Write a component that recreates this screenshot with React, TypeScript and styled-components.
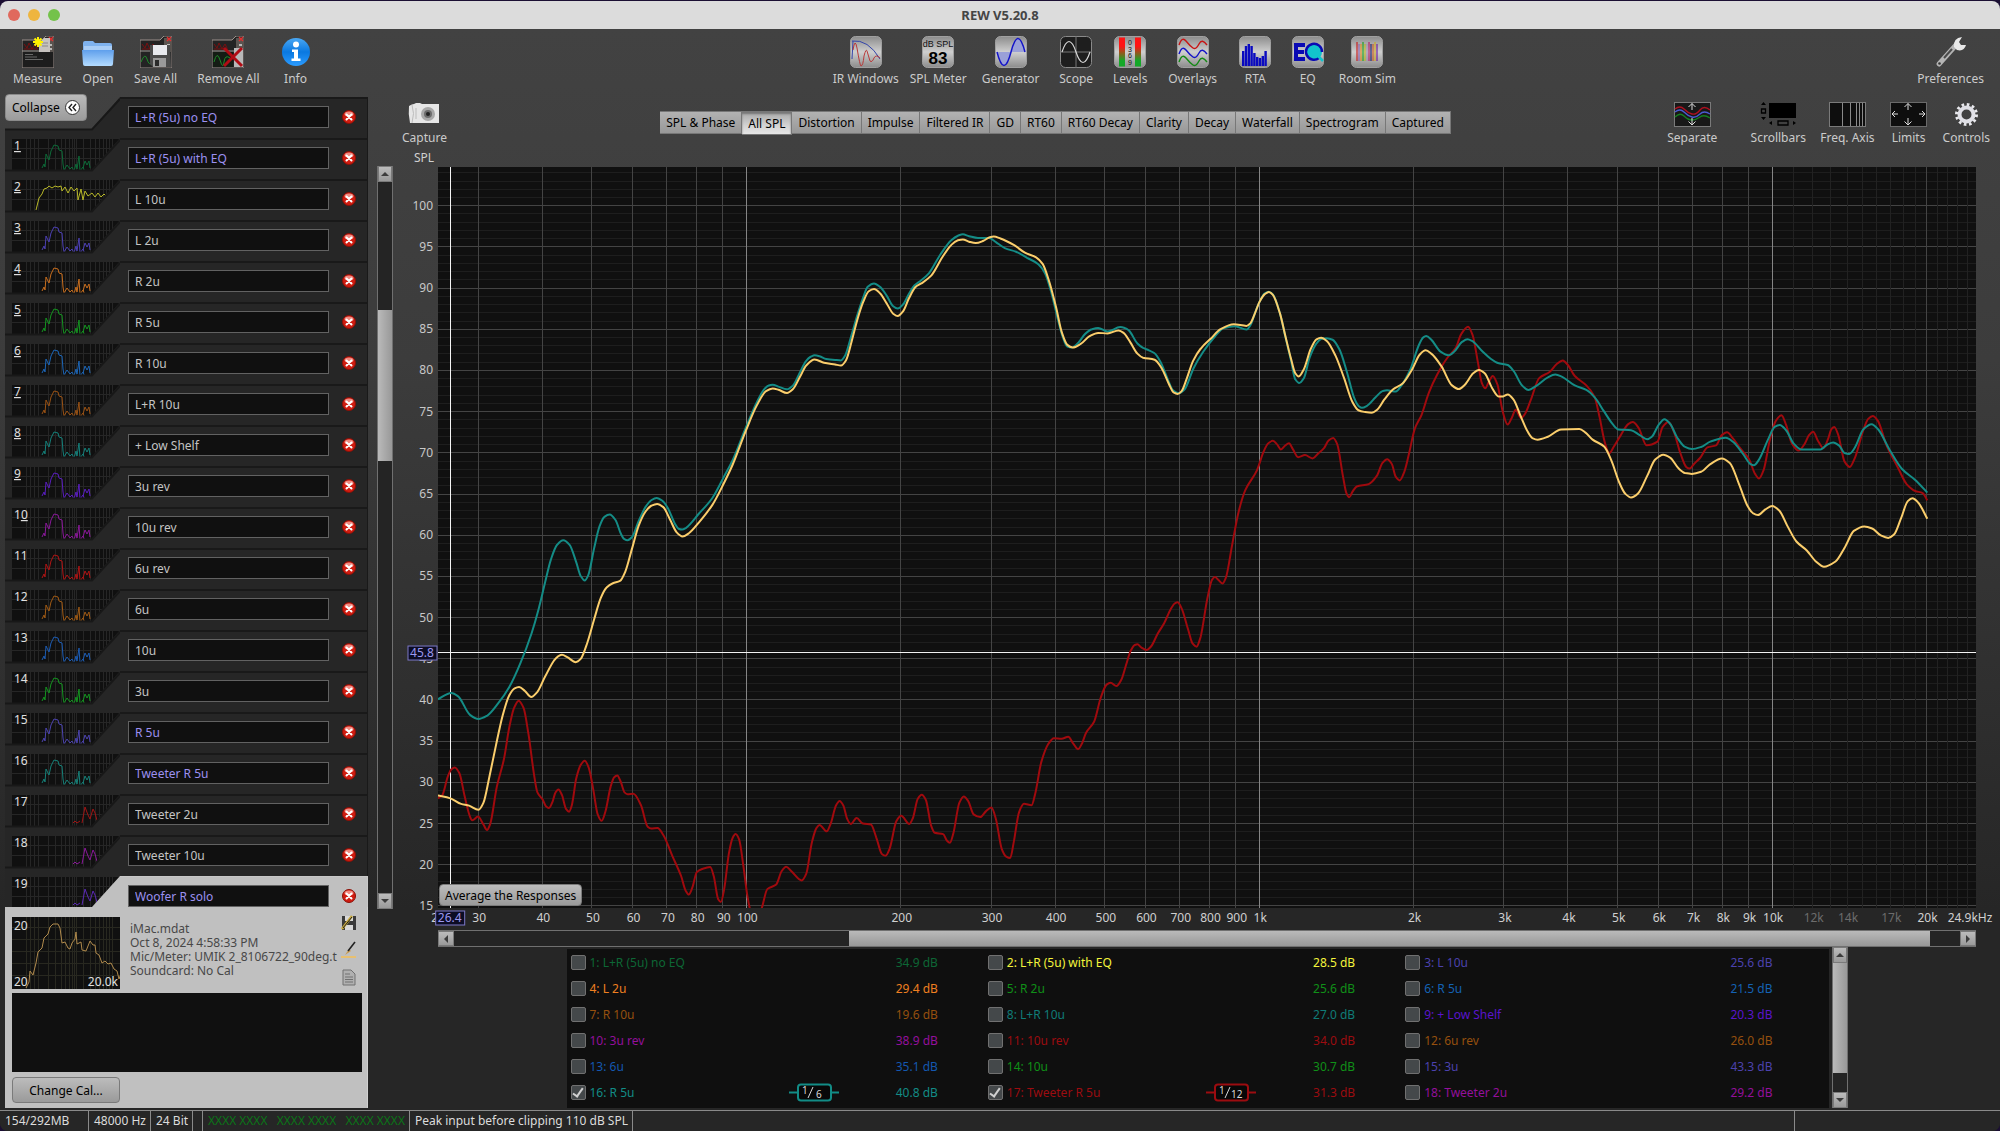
import React from 'react';
import styled, { createGlobalStyle, css } from 'styled-components';

const FONT = '"Noto Sans", "Open Sans", "Liberation Sans", sans-serif';

const GlobalStyle = createGlobalStyle`
  * { box-sizing: border-box; }
  body { margin: 0; background: #1b0f33; font-family: ${FONT}; font-size: 12px; color: #d0d0d0; }
  button, input, textarea { font-family: inherit; font-size: inherit; margin: 0; }
  button { cursor: default; }
  svg { display: block; }
`;

/* ---------- shared parts ---------- */

const metal = css`
  background: linear-gradient(#bcbcbc, #9a9a9a);
  border: 1px solid #7a7a7a;
`;

const Window = styled.div`
  display: flex;
  flex-direction: column;
  min-height: 100vh;
  border-top: 1px solid #1b0f33;
`;

const TitleBar = styled.header`
  display: grid;
  grid-template-columns: 1fr auto 1fr;
  align-items: center;
  height: 28px;
  padding: 0 8px;
  background: #dcdcdc;
  border-radius: 8px 8px 0 0;
`;

const Lights = styled.div`
  display: flex;
  gap: 8px;
`;

const Light = styled.button<{ $color: string }>`
  width: 12px;
  height: 12px;
  padding: 0;
  border: 0;
  border-radius: 50%;
  background: ${(p) => p.$color};
`;

const Title = styled.h1`
  margin: 0;
  font-size: 13px;
  font-weight: 700;
  line-height: 16px;
  color: #454545;
`;

const Surface = styled.div`
  flex: 1;
  display: flex;
  flex-direction: column;
  background: linear-gradient(#424242, #3c3c3c 30%, #262626 80%, #262626);
  border-radius: 0 0 8px 8px;
  overflow: hidden;
`;

const Toolbar = styled.nav`
  display: flex;
  justify-content: space-between;
  height: 68px;
  padding: 7px 16px 0 13px;
`;

const ToolGroup = styled.div<{ $gap: number }>`
  display: flex;
  align-items: flex-start;
  gap: ${(p) => p.$gap}px;
`;

const ToolButton = styled.button<{ $min?: number }>`
  display: flex;
  flex-direction: column;
  align-items: center;
  gap: 2px;
  min-width: ${(p) => p.$min ?? 0}px;
  padding: 0;
  border: 0;
  background: none;
  color: #cbcbcb;
  line-height: 17px;
  white-space: nowrap;
`;

const Body = styled.div`
  flex: 1;
  display: grid;
  grid-template-columns: 363px 16px 1fr;
  column-gap: 9px;
  padding-left: 5px;
`;

/* ---------- measurement list ---------- */

const Sidebar = styled.aside`
  display: flex;
  flex-direction: column;
  padding-bottom: 2px;
`;

const Folder = styled.div<{ $first?: boolean; $open?: boolean }>`
  flex: ${(p) => (p.$open ? '0 0 31px' : '1 0 41px')};
  display: flex;
  background: ${(p) => (p.$first ? 'none' : '#262626')};
  position: relative;
`;

const TabFace = styled.div<{ $open?: boolean }>`
  flex: 1;
  display: flex;
  align-items: flex-start;
  gap: 13px;
  padding: ${(p) => (p.$open ? '8px 11px 0 8px' : '7px 11px 0 8px')};
  background: ${(p) => (p.$open ? '#c0c0c0' : '#262626')};
  border-top: ${(p) => (p.$open ? '1px solid #c8c8c8' : '2px solid #191919')};
  border-right: 1px solid ${(p) => (p.$open ? '#c8c8c8' : '#191919')};
`;

const NameField = styled.input<{ $hot?: boolean }>`
  flex: 1;
  min-width: 0;
  height: 22px;
  padding: 0 6px;
  border: 1px solid #626262;
  background: #101010;
  color: ${(p) => (p.$hot ? '#9c90f0' : '#c4c4c4')};
`;

const DeleteButton = styled.button`
  width: 14px;
  height: 14px;
  margin-top: 4px;
  padding: 0;
  border: 0;
  background: none;
`;

const CollapseButton = styled.button`
  position: absolute;
  left: 0;
  top: -3px;
  display: flex;
  align-items: center;
  gap: 5px;
  height: 27px;
  padding: 0 6px;
  border: 1px solid #8a8a8a;
  border-radius: 4px;
  background: linear-gradient(#bababa, #9c9c9c);
  color: #000;
`;

const Card = styled.section`
  display: flex;
  flex-direction: column;
  padding: 10px 5px 5px 7px;
  background: #c0c0c0;
  border-right: 1px solid #d0d0d0;
`;

const CardHead = styled.div`
  display: grid;
  grid-template-columns: 108px 1fr 20px;
  column-gap: 10px;
  padding-right: 3px;
`;

const CardText = styled.p`
  min-width: 0;
  margin: 5px 0 0;
  color: #484848;
  line-height: 14px;
  white-space: pre;
`;

const CardTools = styled.div`
  display: flex;
  flex-direction: column;
  align-items: center;
  gap: 10px;
  margin-top: -2px;
`;

const BareButton = styled.button`
  padding: 0;
  border: 0;
  background: none;
`;

const Notes = styled.textarea`
  height: 79px;
  margin: 4px 0 5px;
  padding: 4px;
  border: 0;
  background: #101010;
  color: #d0d0d0;
  resize: none;
`;

const MetalButton = styled.button<{ $width?: number }>`
  ${metal}
  align-self: flex-start;
  width: ${(p) => (p.$width ? `${p.$width}px` : 'auto')};
  height: ${(p) => (p.$width ? 26 : 22)}px;
  padding: 0 5px;
  border-radius: 4px;
  color: #000;
`;

/* ---------- scroll bars ---------- */

const VScroll = styled.div<{ $top?: number; $bottom?: number }>`
  display: flex;
  flex-direction: column;
  width: 16px;
  margin: ${(p) => p.$top ?? 0}px 0 ${(p) => p.$bottom ?? 0}px;
  background: #242424;
  border: solid #707070;
  border-width: 0 1px;
`;

const HScroll = styled.div`
  display: flex;
  height: 17px;
  background: #242424;
  border: solid #707070;
  border-width: 1px 0;
`;

const Space = styled.div<{ $grow: number }>`
  flex: ${(p) => p.$grow} 1 0;
`;

const Thumb = styled.div<{ $grow: number; $vertical?: boolean }>`
  flex: ${(p) => p.$grow} 1 0;
  background: linear-gradient(${(p) => (p.$vertical ? 'to right, ' : '')}#bababa, #989898);
`;

const ArrowButton = styled.button`
  ${metal}
  display: flex;
  align-items: center;
  justify-content: center;
  flex: 0 0 16px;
  min-height: 15px;
  padding: 0;
`;

/* ---------- graph area ---------- */

const Main = styled.main`
  display: flex;
  flex-direction: column;
  min-width: 0;
`;

const ViewBar = styled.div`
  display: flex;
  justify-content: space-between;
  height: 54px;
  padding: 5px 10px 0 0;
`;

const Tabs = styled.div`
  display: flex;
  align-self: flex-start;
  height: 23px;
  margin: 9px 0 0 16px;
`;

const Tab = styled.button<{ $active?: boolean }>`
  padding: 0 6px;
  height: ${(p) => (p.$active ? 24 : 23)}px;
  border: 1px solid #777;
  border-left-width: 0;
  background: ${(p) => (p.$active ? 'linear-gradient(#a8a8a8, #d2d2d2 60%, #e6e6e6)' : 'linear-gradient(#b2b2b2, #989898)')};
  box-shadow: ${(p) => (p.$active ? 'inset 0 2px 2px #777' : 'none')};
  color: #000;
  white-space: nowrap;
`;

const AxisTitle = styled.div`
  height: 16px;
  padding-left: 12px;
  line-height: 14px;
`;

const GraphGrid = styled.div`
  flex: 1;
  display: grid;
  grid-template: 1fr 22px 17px / 36px 1fr;
  padding-right: 24px;
`;

const AxisCell = styled.div`
  position: relative;
  & > svg { position: absolute; inset: 0; overflow: visible; }
`;

const PlotCell = styled.div`
  position: relative;
  min-height: 400px;
  background: #101010;
  & > svg { position: absolute; inset: 0; }
`;

const Floating = styled.div`
  position: absolute;
  left: 1px;
  bottom: 2px;
`;

const LegendRow = styled.div`
  display: flex;
  justify-content: center;
  height: 163px;
  padding: 0 24px 2px 36px;
`;

const Legend = styled.div`
  display: grid;
  grid-template-columns: repeat(3, 1fr);
  align-content: start;
  width: 1262px;
  margin: 2px 3px 0 0;
  padding-right: 10px;
  background: #0f0f0f;
`;

const LegendItem = styled.label<{ $color: string }>`
  display: flex;
  align-items: center;
  height: 26px;
  padding: 0 46px 0 4px;
  color: ${(p) => p.$color};
`;

const Tick = styled.input`
  appearance: none;
  display: grid;
  place-items: center;
  width: 15px;
  height: 15px;
  margin-right: 4px;
  border: 1px solid #707070;
  border-radius: 2px;
  background: #44484a;
  &:checked::after {
    content: "";
    width: 4px;
    height: 9px;
    margin-bottom: 2px;
    border: solid #d0d0d0;
    border-width: 0 2px 2px 0;
    transform: rotate(35deg);
  }
`;

const LegendName = styled.span`
  flex: 1;
`;

const LegendValue = styled.span`
  width: 99px;
  text-align: right;
`;

/* ---------- status bar ---------- */

const Status = styled.footer`
  display: flex;
  height: 21px;
  border-top: 1px solid #8a8a8a;
  background: #262626;
  line-height: 20px;
  color: #dcdcdc;
  white-space: pre;
`;

const StatusCell = styled.div<{ $min?: number; $green?: boolean }>`
  min-width: ${(p) => p.$min ?? 0}px;
  padding: 0 4px 0 5px;
  border-right: 1px solid #8a8a8a;
  color: ${(p) => (p.$green ? '#0b7418' : 'inherit')};
`;

const StatusFill = styled.div`
  flex: 1;
  border-right: 1px solid #8a8a8a;
`;

const StatusEnd = styled.div`
  width: 205px;
`;

/* ---------- icons ---------- */

const Tile = ({ dark, children }: { dark?: boolean; children: React.ReactNode }) => (
  <svg width="32" height="32" viewBox="0 0 32 32">
    <defs>
      <linearGradient id="tile" x1="0" y1="0" x2="0" y2="1">
        <stop offset="0" stopColor="#8c8c8c" />
        <stop offset="0.5" stopColor="#cfcfcf" />
        <stop offset="1" stopColor="#8c8c8c" />
      </linearGradient>
    </defs>
    <rect x="0.5" y="0.5" width="31" height="31" rx="5" fill={dark ? '#1e1e1e' : 'url(#tile)'} stroke={dark ? '#8a8a8a' : '#a0a0a0'} />
    {children}
  </svg>
);

const FolderBase = () => (
  <>
    <path d="M0 4h20l4-4h8v32H0z" fill="#232323" stroke="#9a8f8a" strokeWidth="1" />
    <path d="M2 8l3 4 2-5 3 6 3-5 2 4M2 13h14" stroke="#7a1010" fill="none" />
    <path d="M0 15h32" stroke="#a09a96" />
    <path d="M24 2h8v14h-8z" fill="#5a5450" />
    <path d="M27 1l4 4m0-4l-4 4" stroke="#e03030" strokeWidth="1.4" />
    <path d="M27 9h3M27 13h3" stroke="#d8d8d8" strokeWidth="1.5" />
  </>
);

const MeasureIcon = () => (
  <svg width="32" height="32" viewBox="0 0 32 32">
    <FolderBase />
    <path d="M17 7l5-5h6v14H17z" fill="#c6c2bf" />
    <path d="M20 7h6M20 10h6" stroke="#888" />
    <rect x="1" y="16" width="30" height="15" fill="#1d1d1d" />
    <path d="M3 18.500h8M3 21h12M3 23.500h18" stroke="#7c7c7c" strokeWidth="0.800" />
    <path d="M16 1v10M11 6h10M12.500 2.500l7 7M19.500 2.500l-7 7" stroke="#fff200" strokeWidth="2" />
  </svg>
);

const OpenIcon = () => (
  <svg width="32" height="32" viewBox="0 0 32 32">
    <defs>
      <linearGradient id="open" x1="0" y1="0" x2="0" y2="1">
        <stop offset="0" stopColor="#5f9fec" />
        <stop offset="1" stopColor="#b4dcff" />
      </linearGradient>
    </defs>
    <path d="M1 28V7q0-2 2-2h8l2 2h15q2 0 2 2v19z" fill="#7fb2ee" />
    <path d="M2 10h28v5H2z" fill="#a9cdf6" />
    <path d="M0 14h32l-1 14q0 2-2 2H3q-2 0-2-2z" fill="url(#open)" />
  </svg>
);

const SaveAllIcon = () => (
  <svg width="32" height="32" viewBox="0 0 32 32">
    <FolderBase />
    <path d="M1 26q4-10 6-3t5 4" stroke="#1f8a2a" fill="none" />
    <path d="M10 9h20l1 22H13l-3-3z" fill="#4a4a4a" />
    <rect x="13" y="9" width="14" height="10" fill="#e8eaee" />
    <rect x="13" y="22" width="13" height="9" fill="#9a9a9a" />
    <rect x="15" y="24" width="4" height="6" fill="#2a2a2a" />
  </svg>
);

const RemoveAllIcon = () => (
  <svg width="32" height="32" viewBox="0 0 32 32">
    <FolderBase />
    <rect x="1" y="16" width="20" height="15" fill="#141c14" />
    <path d="M2 26q3-12 6-2t4 2 6-4" stroke="#1f8a2a" fill="none" />
    <rect x="22" y="12" width="9" height="19" fill="#b8b8b8" />
    <path d="M12 12l18 18M30 12L12 30" stroke="#b00c14" strokeWidth="3" />
  </svg>
);

const InfoIcon = () => (
  <svg width="32" height="32" viewBox="0 0 32 32">
    <defs>
      <linearGradient id="info" x1="0" y1="0" x2="0" y2="1">
        <stop offset="0" stopColor="#4aa8f4" />
        <stop offset="0.5" stopColor="#0a78e0" />
        <stop offset="1" stopColor="#2c9cff" />
      </linearGradient>
    </defs>
    <circle cx="16" cy="16" r="14" fill="url(#info)" />
    <circle cx="16" cy="8.500" r="3" fill="#fff" />
    <path d="M12 13.500h6v9h2.500v2.500h-9v-2.500h2.500v-6.500H12z" fill="#fff" />
  </svg>
);

const IrIcon = () => (
  <Tile>
    <path d="M2 5q16-2 28 18" stroke="#3344aa" fill="none" />
    <path d="M2 23L3 5" stroke="#3344aa" fill="none" />
    <path d="M3 14q2-13 4-2 3 18 4 18 2 0 3-10 2-8 3-5l3 10q2 2 4-3 2-4 6 0" stroke="#b83a3a" fill="none" />
  </Tile>
);

const SplIcon = () => (
  <Tile>
    <text x="16" y="11" fontSize="9" fill="#111" textAnchor="middle" fontFamily="Liberation Sans">dB SPL</text>
    <text x="16" y="28" fontSize="17" fontWeight="700" fill="#000" textAnchor="middle" fontFamily="Liberation Sans">83</text>
  </Tile>
);

const GeneratorIcon = () => (
  <Tile>
    <path d="M2 16q7 27 14 0z" fill="#9aa0d8" />
    <path d="M16 16q7-27 14 0z" fill="#9aa0d8" />
    <path d="M2 16q7 27 14 0t14 0" stroke="#1414c8" strokeWidth="1.500" fill="none" />
  </Tile>
);

const ScopeIcon = () => (
  <Tile dark>
    <path d="M0 16h32M16 0v32" stroke="#777" />
    <path d="M2 16q7-21 14 0t14 0" stroke="#d8d8d8" strokeWidth="1.200" fill="none" />
  </Tile>
);

const LevelsIcon = () => (
  <Tile>
    <defs>
      <linearGradient id="lvl" x1="0" y1="0" x2="0" y2="1">
        <stop offset="0.300" stopColor="#ff1414" />
        <stop offset="0.800" stopColor="#14a828" />
      </linearGradient>
    </defs>
    <rect x="5" y="1.500" width="6" height="29" fill="url(#lvl)" />
    <rect x="21" y="1.500" width="6" height="29" fill="url(#lvl)" />
    {['0', '3', '6', '9'].map((n, i) => (
      <text key={n} x="16" y={9 + i * 6.5} fontSize="7" fill="#111" textAnchor="middle" fontFamily="Liberation Sans">{n}</text>
    ))}
  </Tile>
);

const OverlaysIcon = () => (
  <Tile>
    <path d="M2 9q3-9 7-4t7 7 6-4 8 1" stroke="#c81414" strokeWidth="1.400" fill="none" />
    <path d="M2 18q3-9 7-4t7 7 6-4 8 1" stroke="#1414c8" strokeWidth="1.400" fill="none" />
    <path d="M2 26q3-9 7-4t7 7 6-4 8 1" stroke="#148a14" strokeWidth="1.400" fill="none" />
  </Tile>
);

const RtaIcon = () => (
  <Tile>
    {[15, 20, 22, 20, 13, 9, 8, 10, 15].map((h, i) => (
      <rect key={i} x={3 + i * 2.8} y={30 - h} width="2.400" height={h} fill="#0a0ac0" />
    ))}
  </Tile>
);

const EqIcon = () => (
  <Tile>
    <path d="M2 7h11v4H6v3h6v4H6v3h7v4H2z" fill="#0a0ab4" />
    <circle cx="22" cy="16" r="8" fill="#12c4cc" />
    <path d="M27 22a8 8 0 1 1 3-6" stroke="#0a0ab4" strokeWidth="2.500" fill="none" />
    <path d="M26 20l5 5" stroke="#12c4cc" strokeWidth="2.500" />
  </Tile>
);

const ROOM_COLORS = ['#c81414', '#8a5ab0', '#e08a14', '#14a014', '#b4b414', '#a08ab0', '#b41464', '#141464', '#c85014', '#d2aa14', '#6a14a0'];

const RoomIcon = () => (
  <Tile>
    {ROOM_COLORS.map((c, i) => (
      <path key={c} d={`M${6 + i * 2} ${i % 3 ? 8 : 6}V25`} stroke={c} strokeWidth="1.100" />
    ))}
  </Tile>
);

const WrenchIcon = () => (
  <svg width="32" height="32" viewBox="0 0 32 32">
    <path d="M4 28L21 9" stroke="#b4b4b4" strokeWidth="5" strokeLinecap="round" />
    <path d="M9 22l8-9" stroke="#4a4a4a" strokeWidth="2" />
    <path d="M19 11q-1-9 8-10l-3 5 2 3h5q-2 7-9 5z" fill="#e8e8e8" />
    <circle cx="4.500" cy="27.500" r="1.300" fill="#333" />
  </svg>
);

const CameraIcon = () => (
  <svg width="32" height="25" viewBox="0 0 32 25">
    <path d="M1 4q3-2 5-2l2-1h4l2 1h17v19H2q-2-9-1-17z" fill="#e6e6e6" />
    <path d="M4 3q3 8 0 18M8 6v11" stroke="#bcbcbc" fill="none" />
    <circle cx="20" cy="12" r="7" fill="#a8a8a8" />
    <circle cx="20" cy="12" r="4" fill="#6c6c6c" />
    <circle cx="20" cy="12" r="2" fill="#222" />
  </svg>
);

const SeparateIcon = () => (
  <svg width="37" height="25" viewBox="0 0 37 25">
    <rect x="0.500" y="0.500" width="36" height="24" fill="#181818" stroke="#7a7a7a" />
    <path d="M1 7q5-4 9 0t8 5 8-4 10 0" stroke="#b01020" strokeWidth="1.400" fill="none" />
    <path d="M1 10q5-4 9 0t8 5 8-3 10 0" stroke="#4a5ad0" strokeWidth="1.400" fill="none" />
    <path d="M1 15q5-5 9-1t8 4 8-3 10 1" stroke="#14801e" strokeWidth="1.400" fill="none" />
    <path d="M18 8V1.500M14.500 5L18 1.500 21.500 5M18 16v7M14.500 19.500L18 23l3.500-3.500" stroke="#ddd" fill="none" />
  </svg>
);

const ScrollbarsIcon = () => (
  <svg width="37" height="25" viewBox="0 0 37 25">
    <rect x="9" y="1" width="27" height="15" fill="#000" />
    <path d="M1 3l2.500-3L6 3zM1 15l2.500 3L6 15zM12 19v4l-3-2zM33 19v4l3-2z" fill="#000" />
    <path d="M1.500 7h4v4h-4zM18 19h10v4H18z" stroke="#000" fill="none" strokeWidth="1.300" />
  </svg>
);

const FreqAxisIcon = () => (
  <svg width="37" height="25" viewBox="0 0 37 25">
    <rect x="0.500" y="0.500" width="36" height="24" fill="#0e0e0e" stroke="#7a7a7a" />
    <path d="M13.500 1v23M21.500 1v23M27.500 1v23M30.500 1v23M33.500 1v23" stroke="#8a8a8a" />
  </svg>
);

const LimitsIcon = () => (
  <svg width="37" height="25" viewBox="0 0 37 25">
    <rect x="0.500" y="0.500" width="36" height="24" fill="#0e0e0e" stroke="#6a6a6a" />
    <path d="M18 8V1.500M14.500 5L18 1.500 21.500 5M18 16v7M14.500 19.500L18 23l3.500-3.500M8 12H2M5 9l-3 3 3 3M29 12h6M32 9l3 3-3 3" stroke="#ddd" fill="none" />
  </svg>
);

const GearIcon = () => (
  <svg width="25" height="25" viewBox="0 0 25 25">
    <circle cx="12.500" cy="12.500" r="10" fill="none" stroke="#e8e8ec" strokeWidth="3" strokeDasharray="2.618 2.618" />
    <circle cx="12.500" cy="12.500" r="7" fill="none" stroke="#e0e0e6" strokeWidth="4" />
  </svg>
);

const DeleteIcon = () => (
  <svg width="14" height="14" viewBox="0 0 14 14">
    <circle cx="7" cy="7" r="6.500" fill="#d01c10" stroke="#8a1008" />
    <ellipse cx="7" cy="4" rx="4.500" ry="2.500" fill="#f08a80" />
    <path d="M4.500 4.500l5 5M9.500 4.500l-5 5" stroke="#fff" strokeWidth="2" strokeLinecap="round" />
  </svg>
);

const ChevronsIcon = () => (
  <svg width="15" height="15" viewBox="0 0 15 15">
    <circle cx="7.500" cy="7.500" r="7" fill="#fff" stroke="#333" />
    <path d="M7 4L4 7.500 7 11M11 4L8 7.500 11 11" stroke="#222" strokeWidth="1.400" fill="none" />
  </svg>
);

const SaveIcon = () => (
  <svg width="16" height="16" viewBox="0 0 16 16">
    <path d="M1 1h14v14H1z" fill="#3a3a3a" />
    <path d="M4 1h8v5H4zM4 10h8v5H4z" fill="#d8d8d8" />
    <path d="M1 14L11 1" stroke="#c8a83a" strokeWidth="2.500" />
    <path d="M2 13L11 2" stroke="#222" />
  </svg>
);

const BrushIcon = () => (
  <svg width="16" height="18" viewBox="0 0 16 18">
    <path d="M0 15h15v2H0z" fill="#e8c070" />
    <path d="M4 14l4-6 2 2z" fill="#c89a50" />
    <path d="M7 10L14 1" stroke="#222" strokeWidth="1.600" />
  </svg>
);

const NoteIcon = () => (
  <svg width="14" height="17" viewBox="0 0 14 17">
    <path d="M1 1h8l4 4v11H1z" fill="#b0b0b0" stroke="#707070" />
    <path d="M3 5h5M3 8h8M3 10.500h8M3 13h8" stroke="#707070" strokeWidth="1.200" />
  </svg>
);

const Arrow = ({ dir }: { dir: 'up' | 'down' | 'left' | 'right' }) => {
  const d = { up: 'M0 6l4-4 4 4z', down: 'M0 2l4 4 4-4z', left: 'M6 0L2 4l4 4z', right: 'M2 0l4 4-4 4z' }[dir];
  return (
    <svg width="8" height="8" viewBox="0 0 8 8"><path d={d} fill="#3c3c3c" /></svg>
  );
};

/* ---------- data ---------- */

type Pt = [number, number];

const NAMES = ['L+R (5u) no EQ', 'L+R (5u) with EQ', 'L 10u', 'L 2u', 'R 2u', 'R 5u', 'R 10u', 'L+R 10u', '+ Low Shelf', '3u rev', '10u rev', '6u rev', '6u', '10u', '3u', 'R 5u', 'Tweeter R 5u', 'Tweeter 2u', 'Tweeter 10u'];
const HOT = [0, 1, 15, 16];
const TRACE_COLORS = ['', '#0d6a38', '#b8b828', '#4c40b4', '#c86e1e', '#149420', '#1c66b8', '#9a5214', '#14807a', '#5a1ec0', '#8a189a', '#b01414', '#a05a14', '#1c5cb4', '#149420', '#4c44b0', '#168078', '#a01414', '#8a189a', '#5a28b4'];

const LEGEND: { label: string; value: string; color: string; filter?: string }[] = [
  { label: '1: L+R (5u) no EQ', value: '34.9 dB', color: '#0d6635' },
  { label: '2: L+R (5u) with EQ', value: '28.5 dB', color: '#f4f43c' },
  { label: '3: L 10u', value: '25.6 dB', color: '#4c42ae' },
  { label: '4: L 2u', value: '29.4 dB', color: '#f08020' },
  { label: '5: R 2u', value: '25.6 dB', color: '#109018' },
  { label: '6: R 5u', value: '21.5 dB', color: '#1462b4' },
  { label: '7: R 10u', value: '19.6 dB', color: '#96500e' },
  { label: '8: L+R 10u', value: '27.0 dB', color: '#0f7c78' },
  { label: '9: + Low Shelf', value: '20.3 dB', color: '#5a14cc' },
  { label: '10: 3u rev', value: '38.9 dB', color: '#94109c' },
  { label: '11: 10u rev', value: '34.0 dB', color: '#9c0c10' },
  { label: '12: 6u rev', value: '26.0 dB', color: '#96500e' },
  { label: '13: 6u', value: '35.1 dB', color: '#1458b0' },
  { label: '14: 10u', value: '30.7 dB', color: '#109018' },
  { label: '15: 3u', value: '43.3 dB', color: '#4c42ae' },
  { label: '16: R 5u', value: '40.8 dB', color: '#128c86', filter: '6' },
  { label: '17: Tweeter R 5u', value: '31.3 dB', color: '#9c0c10', filter: '12' },
  { label: '18: Tweeter 2u', value: '29.2 dB', color: '#94109c' },
];

const lowBand = ([x, y]: Pt): Pt => [x / 2.24 - 18, y / 2.178 + 33];
const highBand = ([x, y]: Pt): Pt => [x / 1.742 + 642, y / 2.45 + 93];

const parse = (s: string): Pt[] => s.trim().split(/\s+/).map((p) => p.split(',').map(Number) as Pt);

const TEAL: Pt[] = [
  ...parse('40,1089 70,1075 85,1082 112,1123 131,1132 150,1125 175,1098 200,1062 225,1010 250,945 265,895 280,835 293,785 307,752 321,742 335,752 350,790 360,820 369,830 377,818 390,760 402,712 413,691 425,686 438,698 450,728 457,739 465,742 475,735 490,700 505,670 518,655 530,650 543,656 555,672 572,708 579,717 587,719 596,715 625,684 655,650 680,605 700,568 730,496 755,440 770,414 780,405 790,403 803,407 822,413 835,405 852,374 865,351 875,342 884,339 895,341 910,347 930,349 943,350 952,340 965,300 980,250 993,212 1003,189 1017,182 1030,189 1045,208 1060,232 1070,237 1082,228 1095,205 1108,186 1123,175 1140,160 1165,120 1190,88 1205,78 1216,75 1230,79 1250,83 1275,83 1290,92 1310,105 1335,113 1360,126 1385,140 1400,160 1415,205 1430,265 1440,300 1450,320 1460,322 1475,311 1490,292 1505,282 1519,279 1540,287').map(lowBand),
  ...parse('70,165 78,167 85,173 100,205 110,216 120,222 130,229 140,250 152,290 162,320 172,327 182,318 198,265 215,225 235,188 250,168 270,163 290,171 297,160 305,130 313,102 322,82 329,78 336,85 348,130 358,190 368,250 375,293 382,302 390,290 400,240 412,205 420,194 430,192 440,196 452,220 465,275 478,340 485,358 491,363 500,358 515,337 527,322 535,320 550,323 560,308 575,270 590,210 598,190 603,187 612,196 628,225 642,234 652,225 665,202 675,195 683,199 700,223 715,242 728,253 745,258 755,272 770,308 781,319 795,309 815,288 828,281 840,287 862,308 882,319 897,338 912,370 928,403 938,416 960,418 975,430 988,440 996,434 1008,405 1018,391 1028,402 1040,435 1054,459 1066,464 1082,459 1098,446 1125,436 1138,447 1155,476 1168,501 1174,504 1182,492 1200,436 1210,410 1219,405 1230,418 1243,450 1256,465 1290,465 1302,453 1312,448 1322,455 1332,474 1340,476 1350,460 1365,415 1379,403 1390,415 1410,465 1432,513 1455,540 1476,571').map(highBand),
];

const YELLOW: Pt[] = [
  ...parse('40,1299 68,1305 92,1317 110,1321 131,1330 142,1315 155,1260 170,1190 185,1125 200,1080 212,1065 222,1062 235,1071 249,1084 262,1074 280,1040 300,1005 310,995 318,992 330,997 349,1008 360,1001 375,965 390,915 405,868 418,845 432,836 448,831 460,810 475,760 490,710 505,680 518,667 531,663 545,670 560,697 575,725 588,734 602,727 625,703 655,665 680,619 700,578 730,503 755,447 775,417 790,411 803,414 822,421 835,413 852,384 865,361 884,348 905,355 930,359 943,361 954,350 967,308 980,260 993,222 1005,199 1017,194 1030,203 1045,225 1060,248 1070,253 1082,243 1095,215 1110,190 1123,182 1145,165 1170,125 1190,98 1205,88 1216,86 1230,91 1245,94 1262,89 1275,82 1285,80 1300,84 1330,98 1355,115 1380,125 1395,140 1410,180 1425,235 1438,290 1450,316 1462,322 1480,314 1500,297 1519,290 1540,291').map(lowBand),
  ...parse('67,173 76,179 88,203 100,230 110,240 130,245 142,265 155,305 163,325 170,329 177,322 185,295 197,248 210,218 228,193 245,170 268,158 290,162 297,155 305,130 313,102 322,84 329,79 336,86 348,130 358,188 368,245 375,278 381,286 390,268 402,218 412,195 420,191 430,199 445,235 460,290 475,350 485,369 495,373 508,375 518,367 530,343 545,318 562,303 578,270 592,232 602,222 612,230 630,262 648,308 660,317 670,307 685,278 695,270 705,278 718,315 729,335 737,335 745,330 755,342 768,385 780,422 788,437 797,441 815,434 838,416 870,415 880,423 893,441 913,458 925,490 940,548 950,574 960,583 972,573 988,530 1002,490 1016,478 1028,485 1043,512 1054,523 1066,525 1082,520 1098,501 1118,487 1132,498 1148,550 1163,604 1172,621 1181,626 1194,612 1206,604 1218,615 1232,652 1248,691 1266,713 1282,740 1296,753 1316,740 1332,706 1348,665 1366,654 1380,659 1395,676 1408,682 1418,674 1430,635 1442,592 1450,585 1460,595 1476,635').map(highBand),
];

const RED: Pt[] = [
  ...parse('40,1305 50,1298 62,1258 70,1242 78,1238 88,1250 100,1300 112,1345 117,1353 130,1345 142,1362 150,1374 157,1362 172,1280 188,1220 200,1150 210,1110 221,1092 232,1108 243,1165 255,1250 263,1292 275,1308 282,1322 289,1326 297,1312 303,1293 310,1286 318,1298 327,1328 334,1334 340,1320 350,1262 360,1232 369,1223 378,1238 388,1285 398,1340 407,1354 415,1335 427,1280 435,1259 442,1255 450,1270 458,1292 465,1296 478,1295 495,1320 510,1367 518,1371 532,1370 545,1385 565,1430 585,1475 595,1506 602,1515 610,1500 620,1466 632,1459 650,1455 658,1475 668,1525 674,1531 681,1505 692,1425 700,1392 707,1383 715,1395 724,1450 733,1515 740,1550 752,1575 766,1543 778,1503 798,1493 810,1464 820,1454 832,1464 855,1484 865,1470 878,1400 888,1370 895,1363 911,1377 920,1360 932,1320 940,1311 948,1320 957,1350 965,1361 978,1348 992,1360 1010,1362 1022,1390 1035,1427 1043,1430 1052,1415 1067,1355 1078,1343 1096,1361 1104,1348 1115,1306 1124,1297 1133,1308 1145,1365 1153,1380 1172,1383 1180,1397 1187,1402 1195,1380 1208,1315 1218,1301 1228,1311 1240,1340 1255,1346 1268,1333 1280,1325 1290,1350 1303,1415 1313,1432 1322,1435 1330,1400 1342,1335 1353,1317 1370,1320 1378,1295 1392,1225 1407,1187 1420,1174 1437,1175 1452,1171 1463,1185 1474,1198 1483,1185 1492,1162 1510,1138 1525,1085 1538,1057 1547,1053 1560,1060').map(lowBand),
  ...parse('72,1030 80,995 88,960 95,945 100,943 107,951 116,957 124,948 135,918 147,890 158,857 165,843 170,840 177,855 188,905 196,941 203,949 210,925 222,830 230,785 235,778 241,785 248,794 254,780 265,700 276,620 288,565 308,517 320,470 328,450 336,444 343,452 350,465 357,456 364,450 371,465 380,484 392,479 405,487 415,475 425,462 433,443 441,437 448,452 458,530 464,572 469,582 475,568 482,556 503,550 517,530 527,498 535,489 543,500 550,532 557,541 565,520 574,470 583,415 595,380 608,325 622,282 640,240 655,215 664,182 676,164 684,185 693,250 700,302 706,315 712,300 719,285 727,305 736,370 745,404 752,388 759,368 768,388 775,378 785,345 800,290 818,275 830,256 841,247 850,258 862,285 882,308 896,335 905,385 915,452 922,474 930,458 942,430 955,403 963,398 973,412 987,455 1006,446 1015,410 1025,398 1034,420 1046,475 1056,508 1062,512 1070,500 1080,486 1093,460 1108,455 1118,430 1127,423 1137,437 1150,462 1165,488 1176,525 1183,536 1191,515 1202,440 1212,395 1222,381 1230,405 1240,450 1252,468 1262,452 1270,430 1277,422 1286,445 1295,462 1303,440 1309,415 1314,410 1321,430 1332,495 1341,508 1350,485 1364,420 1373,390 1381,383 1390,395 1405,455 1425,510 1440,550 1455,567 1468,572 1476,590').map(highBand),
];

/* Monotone cubic interpolation keeps peaks and dips exactly at their sampled points. */
const smooth = (pts: Pt[]): string => {
  const n = pts.length;
  const s = pts.slice(1).map((p, i) => (p[1] - pts[i][1]) / (p[0] - pts[i][0]));
  const m = pts.map((_, i) => {
    if (i === 0) return s[0];
    if (i === n - 1) return s[n - 2];
    return s[i - 1] * s[i] <= 0 ? 0 : (2 * s[i - 1] * s[i]) / (s[i - 1] + s[i]);
  });
  let d = `M${pts[0][0].toFixed(1)} ${pts[0][1].toFixed(1)}`;
  for (let i = 1; i < n; i++) {
    const [x0, y0] = pts[i - 1];
    const [x1, y1] = pts[i];
    const h = (x1 - x0) / 3;
    d += `C${(x0 + h).toFixed(1)} ${(y0 + m[i - 1] * h).toFixed(1)} ${(x1 - h).toFixed(1)} ${(y1 - m[i] * h).toFixed(1)} ${x1.toFixed(1)} ${y1.toFixed(1)}`;
  }
  return d;
};

/* ---------- axes ---------- */

const F_MIN = 25.05;
const F_MAX = 24980;
const DB_MAX = 104.7;
const DB_MIN = 14.75;
const fx = (f: number) => `${((Math.log10(f / F_MIN) / Math.log10(F_MAX / F_MIN)) * 100).toFixed(3)}%`;
const dy = (v: number) => `${(((DB_MAX - v) / (DB_MAX - DB_MIN)) * 100).toFixed(3)}%`;

const majorF = [30, 40, 50, 60, 70, 80, 90, 100, 200, 300, 400, 500, 600, 700, 800, 900, 1000, 2000, 3000, 4000, 5000, 6000, 7000, 8000, 9000, 10000, 20000];
const minorF = [11, 12, 13, 14, 15, 16, 17, 18, 19, 21, 22, 23, 24].map((k) => k * 1000);
const dimF = [12000, 14000, 17000];
const labelF = (f: number) => (f >= 1000 ? `${f / 1000}k` : `${f}`);
const dbLines = Array.from({ length: 90 }, (_, i) => 15 + i);
const dbLabels = Array.from({ length: 18 }, (_, i) => 15 + i * 5);

const Cursor = ({ x, y, text }: { x: string; y: string; text: string }) => (
  <svg x={x} y={y} overflow="visible">
    <rect x="-14" y="-7" width="29" height="14" fill="#0c0c24" stroke="#7c78c8" />
    <text x="0" y="4" textAnchor="middle" fill="#9c98f0">{text}</text>
  </svg>
);

const Graph = () => (
  <GraphGrid>
    <AxisCell>
      <svg width="100%" height="100%" fontSize="12" fill="#c8c8c8">
        {dbLabels.map((v) => (
          <svg key={v} y={dy(v)} overflow="visible"><text x="31" y="4" textAnchor="end">{v}</text></svg>
        ))}
        <Cursor x="20" y={dy(45.7)} text="45.8" />
      </svg>
    </AxisCell>
    <PlotCell>
      <svg width="100%" height="100%" shapeRendering="crispEdges">
        {dbLines.map((v) => (
          <line key={v} x1="0" x2="100%" y1={dy(v)} y2={dy(v)} stroke={v % 5 ? '#1e1e1e' : '#444'} />
        ))}
        {minorF.map((f) => (
          <line key={f} x1={fx(f)} x2={fx(f)} y1="0" y2="100%" stroke="#222" />
        ))}
        {majorF.map((f) => (
          <line key={f} x1={fx(f)} x2={fx(f)} y1="0" y2="100%" stroke={[100, 1000, 10000].includes(f) ? '#858585' : '#444'} />
        ))}
        <line x1="0" x2="100%" y1={dy(45.75)} y2={dy(45.75)} stroke="#f4f4f4" />
        <line x1={fx(26.45)} x2={fx(26.45)} y1="0" y2="100%" stroke="#f4f4f4" />
      </svg>
      <svg width="100%" height="100%" viewBox="0 0 1538 742" preserveAspectRatio="none" fill="none" strokeWidth="2">
        <path d={smooth(RED)} stroke="#a00a0e" vectorEffect="non-scaling-stroke" />
        <path d={smooth(TEAL)} stroke="#148c86" vectorEffect="non-scaling-stroke" />
        <path d={smooth(YELLOW)} stroke="#fbce6c" vectorEffect="non-scaling-stroke" />
      </svg>
      <Floating>
        <MetalButton>Average the Responses</MetalButton>
      </Floating>
    </PlotCell>
    <div />
    <AxisCell>
      <svg width="100%" height="100%" fontSize="12" fill="#d0d0d0" textAnchor="middle">
        <text x="0" y="14">25</text>
        {[...majorF, ...dimF].map((f) => (
          <svg key={f} x={fx(f)} overflow="visible">
            <text x="1" y="14" fill={dimF.includes(f) ? '#6c6c6c' : '#d0d0d0'}>{labelF(f)}</text>
          </svg>
        ))}
        <svg x="100%" overflow="visible"><text x="-6" y="14">24.9kHz</text></svg>
        <Cursor x={fx(26.4)} y="10" text="26.4" />
      </svg>
    </AxisCell>
    <div />
    <HScroll>
      <ArrowButton aria-label="Scroll left"><Arrow dir="left" /></ArrowButton>
      <Space $grow={395} />
      <Thumb $grow={1080} />
      <Space $grow={30} />
      <ArrowButton aria-label="Scroll right"><Arrow dir="right" /></ArrowButton>
    </HScroll>
  </GraphGrid>
);

/* ---------- sidebar drawings ---------- */

const MINI_LOW = 'M30 30l2-4 1 3 1-13 3 6 2-9 3-6 4 1 1 4 3 1 1 13 1 6 3-5 3 4 2-2 2 4 2-7 1 5 2-13 1 15 3-4 2 5M71 30l2-7 2 4 2-4 1 7';
const MINI_HIGH = 'M61 29l2-2 2 2 3-2M70 29l3-16 3 8 2 4 3-10 2 4 3 11';
const MINI_FULL = 'M24 31l3-12 3-4 2-5 3-1 2-2 3 2 3-2 3 1 3-1 1 5 3-4 3 6 3-6 3 4 3-3 1 12 3-11 2 11 2-9 3 5 4-3 3 4 3-4 3 4 3-3 4 4 3-3 3 4 2-2';
const gridX = [14, 18, 22, 26, 36, 43, 49, 53, 57, 60, 62, 64, 71, 78, 83, 87, 91, 94, 97, 100];

const TabDrawing = ({ index, open }: { index: number; open?: boolean }) => {
  const low = open ? 31 : 32;
  const path = index === 2 ? MINI_FULL : index >= 17 ? MINI_HIGH : MINI_LOW;
  const face = open ? '#c0c0c0' : '#262626';
  return (
    <svg width="115" height={open ? 31 : 41} fontSize="12">
      {index > 0 && (
        <>
          <rect x="7" y="1" width="108" height={low - 1} fill="#101010" />
          {gridX.map((x) => <path key={x} d={`M${x + 7}.500 1v31`} stroke="#262626" />)}
          <path d="M7 10.500h108M7 20.500h108" stroke="#262626" />
          <g transform="translate(7 0)"><path d={path} stroke={TRACE_COLORS[index]} fill="none" /></g>
          <text x="9" y="12" fill="#e0e0e0">
            {index < 10 && <tspan textDecoration="underline">{index}</tspan>}
            {index === 10 && <>1<tspan textDecoration="underline">0</tspan></>}
            {index > 10 && index}
          </text>
        </>
      )}
      <path d={`M0 ${low}H87L115 0V42H0z`} fill={face} />
      {!open && <path d="M0 32.500H87L115 2" stroke="#181818" strokeWidth="2" fill="none" />}
    </svg>
  );
};

const CardThumb = () => (
  <svg width="108" height="72" fontSize="12" fill="#e0e0e0">
    <rect width="108" height="72" fill="#101010" />
    {gridX.map((x) => <path key={x} d={`M${x}.500 0v72`} stroke="#282820" />)}
    <path d="M0 10.500h108M0 22.500h108M0 34.500h108M0 46.500h108M0 58.500h108" stroke="#282820" />
    <path d="M14 71l3-6 1-11 3 4 3-12 2-11 4-4 2-10 4-4 2-7 3-3h5l2 4 2 15 3-1 3 6 2 1 2-6 3-4 1-7 1 12 4-2 1 8 4 1 4-10 3 4h2l1 8 3 2 3 8 3-2 3 3 3-1 3 6 3 2 2 8 3-8 2 3 2-9" stroke="#b08a4c" fill="none" />
    <text x="2" y="13">20</text>
    <text x="2" y="69">20</text>
    <text x="106" y="69" textAnchor="end">20.0k</text>
  </svg>
);

const FilterBadge = ({ n, color }: { n: string; color: string }) => (
  <svg width="50" height="19" viewBox="0 0 50 19" fontSize="10" fill="#d8d8d8">
    <path d="M0 9.500h9M41 9.500h9" stroke={color} strokeWidth="2" />
    <rect x="9" y="1.500" width="33" height="16" rx="3" fill="#080808" stroke={color} strokeWidth="2" />
    <text x="13" y="11">1</text>
    <path d="M19 15L24 4" stroke="#d8d8d8" />
    <text x={n.length > 1 ? 25 : 27} y="15">{n}</text>
  </svg>
);

/* ---------- app ---------- */

const LEFT_TOOLS: [string, React.ReactNode][] = [
  ['Measure', <MeasureIcon />], ['Open', <OpenIcon />], ['Save All', <SaveAllIcon />], ['Remove All', <RemoveAllIcon />], ['Info', <InfoIcon />],
];
const MID_TOOLS: [string, React.ReactNode, number][] = [
  ['IR Windows', <IrIcon />, 64], ['SPL Meter', <SplIcon />, 52], ['Generator', <GeneratorIcon />, 66], ['Scope', <ScopeIcon />, 43], ['Levels', <LevelsIcon />, 43], ['Overlays', <OverlaysIcon />, 60], ['RTA', <RtaIcon />, 43], ['EQ', <EqIcon />, 40], ['Room Sim', <RoomIcon />, 48],
];
const VIEW_TOOLS: [string, React.ReactNode, number][] = [
  ['Separate', <SeparateIcon />, 88], ['Scrollbars', <ScrollbarsIcon />, 56], ['Freq. Axis', <FreqAxisIcon />, 54], ['Limits', <LimitsIcon />, 40], ['Controls', <GearIcon />, 46],
];
const TABS = ['SPL & Phase', 'All SPL', 'Distortion', 'Impulse', 'Filtered IR', 'GD', 'RT60', 'RT60 Decay', 'Clarity', 'Decay', 'Waterfall', 'Spectrogram', 'Captured'];

export default function App() {
  return (
    <Window>
      <GlobalStyle />
      <TitleBar>
        <Lights>
          <Light $color="#e0695d" aria-label="Close" />
          <Light $color="#eeb53f" aria-label="Minimise" />
          <Light $color="#74c24a" aria-label="Zoom" />
        </Lights>
        <Title>REW V5.20.8</Title>
      </TitleBar>
      <Surface>
        <Toolbar>
          <ToolGroup $gap={20}>
            {LEFT_TOOLS.map(([name, icon]) => <ToolButton key={name}>{icon}{name}</ToolButton>)}
          </ToolGroup>
          <ToolGroup $gap={11}>
            {MID_TOOLS.map(([name, icon, min]) => <ToolButton key={name} $min={min}>{icon}{name}</ToolButton>)}
          </ToolGroup>
          <ToolButton><WrenchIcon />Preferences</ToolButton>
        </Toolbar>
        <Body>
          <Sidebar>
            {NAMES.map((name, i) => (
              <Folder key={i} $first={i === 0}>
                <TabDrawing index={i} />
                <TabFace>
                  <NameField aria-label={`Measurement ${i + 1}`} defaultValue={name} $hot={HOT.includes(i)} />
                  <DeleteButton aria-label={`Remove ${name}`}><DeleteIcon /></DeleteButton>
                </TabFace>
                {i === 0 && <CollapseButton>Collapse<ChevronsIcon /></CollapseButton>}
              </Folder>
            ))}
            <Folder $open>
              <TabDrawing index={19} open />
              <TabFace $open>
                <NameField aria-label="Measurement 20" defaultValue="Woofer R solo" $hot />
                <DeleteButton aria-label="Remove Woofer R solo"><DeleteIcon /></DeleteButton>
              </TabFace>
            </Folder>
            <Card>
              <CardHead>
                <CardThumb />
                <CardText>{'iMac.mdat\nOct 8, 2024 4:58:33 PM\nMic/Meter: UMIK 2_8106722_90deg.t\nSoundcard: No Cal'}</CardText>
                <CardTools>
                  <BareButton aria-label="Save"><SaveIcon /></BareButton>
                  <BareButton aria-label="Trace colour"><BrushIcon /></BareButton>
                  <BareButton aria-label="Notes"><NoteIcon /></BareButton>
                </CardTools>
              </CardHead>
              <Notes aria-label="Measurement notes" />
              <MetalButton $width={108}>Change Cal...</MetalButton>
            </Card>
          </Sidebar>
          <VScroll $top={69} $bottom={201}>
            <ArrowButton aria-label="Scroll up"><Arrow dir="up" /></ArrowButton>
            <Space $grow={128} />
            <Thumb $grow={151} $vertical />
            <Space $grow={432} />
            <ArrowButton aria-label="Scroll down"><Arrow dir="down" /></ArrowButton>
          </VScroll>
          <Main>
            <ViewBar>
              <ToolButton $min={42}><CameraIcon />Capture</ToolButton>
              <Tabs>
                {TABS.map((t) => <Tab key={t} $active={t === 'All SPL'}>{t}</Tab>)}
              </Tabs>
              <ToolGroup $gap={14}>
                {VIEW_TOOLS.map(([name, icon, min]) => <ToolButton key={name} $min={min}>{icon}{name}</ToolButton>)}
              </ToolGroup>
            </ViewBar>
            <AxisTitle>SPL</AxisTitle>
            <Graph />
            <LegendRow>
              <Legend>
                {LEGEND.map((l) => (
                  <LegendItem key={l.label} $color={l.color}>
                    <Tick type="checkbox" defaultChecked={!!l.filter} />
                    <LegendName>{l.label}</LegendName>
                    {l.filter && <FilterBadge n={l.filter} color={l.color} />}
                    <LegendValue>{l.value}</LegendValue>
                  </LegendItem>
                ))}
              </Legend>
              <VScroll>
                <ArrowButton aria-label="Legend up"><Arrow dir="up" /></ArrowButton>
                <Thumb $grow={109} $vertical />
                <Space $grow={19} />
                <ArrowButton aria-label="Legend down"><Arrow dir="down" /></ArrowButton>
              </VScroll>
            </LegendRow>
          </Main>
        </Body>
        <Status>
          <StatusCell $min={89}>154/292MB</StatusCell>
          <StatusCell>48000 Hz</StatusCell>
          <StatusCell>24 Bit</StatusCell>
          <StatusCell />
          <StatusCell $green>XXXX XXXX   XXXX XXXX   XXXX XXXX</StatusCell>
          <StatusCell>Peak input before clipping 110 dB SPL</StatusCell>
          <StatusFill />
          <StatusEnd />
        </Status>
      </Surface>
    </Window>
  );
}
